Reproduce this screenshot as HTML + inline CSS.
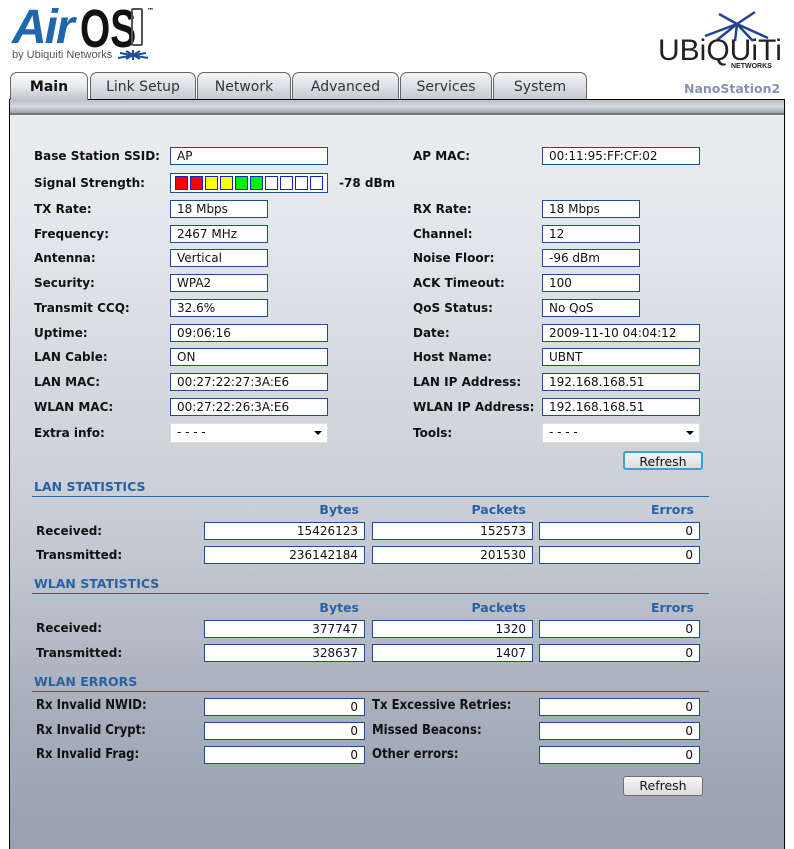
<!DOCTYPE html>
<html><head><meta charset="utf-8"><style>
*{margin:0;padding:0;box-sizing:border-box}
body{width:794px;height:842px;background:#fff;position:relative;overflow:hidden;font-family:"DejaVu Sans",Verdana,sans-serif;font-size:12px;color:#111}
.a{position:absolute}
.l{position:absolute;font-weight:bold;white-space:nowrap}
.b{position:absolute;background:#fff;border:1px solid #1e4f8c;height:18px;padding-left:6px;line-height:16px;font-size:12px;white-space:nowrap;font-weight:normal}
.r{text-align:right;padding-right:6px}
.h{position:absolute;font-weight:bold;color:#2a61a0;font-size:12.5px}
.line{position:absolute;height:1px;background:#2a61a0;left:32px;width:677px}
.tab{position:absolute;top:72px;height:28px;border:1px solid #666;border-bottom:none;border-radius:7px 7px 0 0;background:linear-gradient(#f3f4f6,#d7dbe0 60%,#c3c8cf);text-align:center;line-height:29px;font-size:14px;color:#333}
.btn{position:absolute;border:1px solid #707070;border-radius:3px;background:linear-gradient(#f6f6f6,#dcdcdc);font-size:12.5px;text-align:center;line-height:17px;color:#111}
.sel::after{content:"";position:absolute;right:5px;top:7px;border:4px solid transparent;border-top:4px solid #000;border-bottom:0}
.c{font-family:"DejaVu Sans Condensed","DejaVu Sans",sans-serif;font-size:13px}
</style></head><body>
<!-- logo -->
<div class="a" style="left:12px;top:0px;font:italic bold 48px 'Liberation Sans',sans-serif;color:#1f66ac;letter-spacing:-2px">Air</div>
<div class="a" style="left:80px;top:-2px;font:bold 54px 'Liberation Sans Narrow','Liberation Sans',sans-serif;color:#111;transform:scaleX(.72);transform-origin:left">OS</div>
<div class="a" style="left:131px;top:8px;width:12px;height:38px;border:2px solid #555;border-radius:2px"></div>
<div class="a" style="left:147px;top:7px;font-size:7px;font-weight:bold">™</div>
<div class="a" style="left:12px;top:49px;font:11px 'Liberation Sans Narrow','Liberation Sans',sans-serif;color:#555">by Ubiquiti Networks</div>
<svg class="a" style="left:116px;top:49px" width="34" height="12"><path d="M2 9 L30 4 M10 10 L24 2 M17 11 L17 1 M24 10 L10 2 M32 9 L4 4" stroke="#1f4f9a" stroke-width="2"/></svg>
<svg class="a" style="left:695px;top:10px" width="82" height="32"><g stroke="#22458f" stroke-width="2.5"><path d="M42 14 L10 26 M42 14 L22 30 M42 14 L40 31 M42 14 L58 31 M42 14 L73 28 M42 14 L60 2 M42 14 L24 4"/></g></svg>
<div class="a" style="left:658px;top:34px;font:30px 'Liberation Sans Narrow','Liberation Sans',sans-serif;color:#222">UBiQUiTi</div>
<div class="a" style="left:731px;top:63px;font:bold 7px 'Liberation Sans',sans-serif;color:#222">NETWORKS</div>
<div class="a" style="left:684px;top:81px;font-weight:bold;font-size:12.5px;color:#8494ad">NanoStation2</div>
<!-- tabs -->
<div class="tab" style="left:90px;width:106px">Link Setup</div>
<div class="tab" style="left:197px;width:94px">Network</div>
<div class="tab" style="left:292px;width:107px">Advanced</div>
<div class="tab" style="left:400px;width:92px">Services</div>
<div class="tab" style="left:493px;width:94px">System</div>
<!-- panel -->
<div class="a" style="left:9px;top:99px;width:776px;height:750px;border:1px solid #000;border-bottom:none;background:linear-gradient(#eceef1 0px,#e4e7eb 120px,#c8cdd5 420px,#a6adbb 620px,#8f98a8 842px)"></div>
<div class="a" style="left:10px;top:100px;width:774px;height:13px;background:linear-gradient(#b9bfc8,#d8dce2 50%,#9aa2ae)"></div>
<div class="a" style="left:10px;top:113px;width:774px;height:2px;background:#777"></div>
<div class="a" style="left:10px;top:72px;width:78px;height:28px;background:linear-gradient(#fff,#e6e9ed 50%,#bcc3cc);border-left:1px solid #666;border-right:1px solid #666;border-top:1px solid #666;border-radius:7px 7px 0 0;text-align:center;line-height:29px;font-weight:bold;font-size:14px">Main</div>

<!-- main info -->
<div class="l" style="left:34px;top:149px">Base Station SSID:</div><div class="b" style="left:170px;top:147px;width:158px">AP</div>
<div class="l" style="left:34px;top:176px">Signal Strength:</div>
<div class="b" style="left:170px;top:173px;width:158px;height:20px;padding:2px 0 0 4px">
<span style="display:flex;gap:2px"><i style="width:13px;height:14px;border:1px solid #12c;background:#f00"></i><i style="width:13px;height:14px;border:1px solid #12c;background:#f00"></i><i style="width:13px;height:14px;border:1px solid #12c;background:#ff0"></i><i style="width:13px;height:14px;border:1px solid #12c;background:#ff0"></i><i style="width:13px;height:14px;border:1px solid #12c;background:#0e0"></i><i style="width:13px;height:14px;border:1px solid #12c;background:#0e0"></i><i style="width:13px;height:14px;border:1px solid #12c"></i><i style="width:13px;height:14px;border:1px solid #12c"></i><i style="width:13px;height:14px;border:1px solid #12c"></i><i style="width:13px;height:14px;border:1px solid #12c"></i></span></div>
<div class="l" style="left:339px;top:176px">-78 dBm</div>
<div class="l" style="left:34px;top:202px">TX Rate:</div><div class="b" style="left:170px;top:200px;width:98px">18 Mbps</div>
<div class="l" style="left:34px;top:227px">Frequency:</div><div class="b" style="left:170px;top:225px;width:98px">2467 MHz</div>
<div class="l" style="left:34px;top:251px">Antenna:</div><div class="b" style="left:170px;top:249px;width:98px">Vertical</div>
<div class="l" style="left:34px;top:276px">Security:</div><div class="b" style="left:170px;top:274px;width:98px">WPA2</div>
<div class="l" style="left:34px;top:301px">Transmit CCQ:</div><div class="b" style="left:170px;top:299px;width:98px">32.6%</div>
<div class="l" style="left:34px;top:326px">Uptime:</div><div class="b" style="left:170px;top:324px;width:158px">09:06:16</div>
<div class="l" style="left:34px;top:350px">LAN Cable:</div><div class="b" style="left:170px;top:348px;width:158px">ON</div>
<div class="l" style="left:34px;top:375px">LAN MAC:</div><div class="b" style="left:170px;top:373px;width:158px">00:27:22:27:3A:E6</div>
<div class="l" style="left:34px;top:400px">WLAN MAC:</div><div class="b" style="left:170px;top:398px;width:158px">00:27:22:26:3A:E6</div>
<div class="l" style="left:34px;top:426px">Extra info:</div><div class="b sel" style="left:170px;top:423px;width:158px;height:20px;border-color:#ddd">- - - -</div>

<div class="l" style="left:413px;top:149px">AP MAC:</div><div class="b" style="left:542px;top:147px;width:158px">00:11:95:FF:CF:02</div>
<div class="l" style="left:413px;top:202px">RX Rate:</div><div class="b" style="left:542px;top:200px;width:98px">18 Mbps</div>
<div class="l" style="left:413px;top:227px">Channel:</div><div class="b" style="left:542px;top:225px;width:98px">12</div>
<div class="l" style="left:413px;top:251px">Noise Floor:</div><div class="b" style="left:542px;top:249px;width:98px">-96 dBm</div>
<div class="l" style="left:413px;top:276px">ACK Timeout:</div><div class="b" style="left:542px;top:274px;width:98px">100</div>
<div class="l" style="left:413px;top:301px">QoS Status:</div><div class="b" style="left:542px;top:299px;width:98px">No QoS</div>
<div class="l" style="left:413px;top:326px">Date:</div><div class="b" style="left:542px;top:324px;width:158px">2009-11-10 04:04:12</div>
<div class="l" style="left:413px;top:350px">Host Name:</div><div class="b" style="left:542px;top:348px;width:158px">UBNT</div>
<div class="l" style="left:413px;top:375px">LAN IP Address:</div><div class="b" style="left:542px;top:373px;width:158px">192.168.168.51</div>
<div class="l" style="left:413px;top:400px">WLAN IP Address:</div><div class="b" style="left:542px;top:398px;width:158px">192.168.168.51</div>
<div class="l" style="left:413px;top:426px">Tools:</div><div class="b sel" style="left:542px;top:423px;width:158px;height:20px;border-color:#ddd">- - - -</div>
<div class="btn" style="left:623px;top:451px;width:80px;height:19px;border:2px solid #3aa0d8">Refresh</div>

<!-- LAN stats -->
<div class="h" style="left:34px;top:479px">LAN STATISTICS</div><div class="line" style="top:496px"></div>
<div class="h" style="left:204px;top:502px;width:155px;text-align:right">Bytes</div>
<div class="h" style="left:372px;top:502px;width:154px;text-align:right">Packets</div>
<div class="h" style="left:539px;top:502px;width:155px;text-align:right">Errors</div>
<div class="l" style="left:36px;top:524px">Received:</div>
<div class="b r" style="left:204px;top:522px;width:161px">15426123</div><div class="b r" style="left:372px;top:522px;width:161px">152573</div><div class="b r" style="left:539px;top:522px;width:161px">0</div>
<div class="l" style="left:36px;top:548px">Transmitted:</div>
<div class="b r" style="left:204px;top:546px;width:161px">236142184</div><div class="b r" style="left:372px;top:546px;width:161px">201530</div><div class="b r" style="left:539px;top:546px;width:161px">0</div>

<!-- WLAN stats -->
<div class="h" style="left:34px;top:576px">WLAN STATISTICS</div><div class="line" style="top:593px"></div>
<div class="h" style="left:204px;top:600px;width:155px;text-align:right">Bytes</div>
<div class="h" style="left:372px;top:600px;width:154px;text-align:right">Packets</div>
<div class="h" style="left:539px;top:600px;width:155px;text-align:right">Errors</div>
<div class="l" style="left:36px;top:621px">Received:</div>
<div class="b r" style="left:204px;top:620px;width:161px">377747</div><div class="b r" style="left:372px;top:620px;width:161px">1320</div><div class="b r" style="left:539px;top:620px;width:161px">0</div>
<div class="l" style="left:36px;top:646px">Transmitted:</div>
<div class="b r" style="left:204px;top:644px;width:161px">328637</div><div class="b r" style="left:372px;top:644px;width:161px">1407</div><div class="b r" style="left:539px;top:644px;width:161px">0</div>

<!-- WLAN errors -->
<div class="h" style="left:34px;top:674px">WLAN ERRORS</div><div class="line" style="top:691px"></div>
<div class="l c" style="left:36px;top:698px">Rx Invalid NWID:</div><div class="b r" style="left:204px;top:698px;width:161px">0</div>
<div class="l c" style="left:372px;top:698px">Tx Excessive Retries:</div><div class="b r" style="left:539px;top:698px;width:161px">0</div>
<div class="l c" style="left:36px;top:723px">Rx Invalid Crypt:</div><div class="b r" style="left:204px;top:722px;width:161px">0</div>
<div class="l c" style="left:372px;top:723px">Missed Beacons:</div><div class="b r" style="left:539px;top:722px;width:161px">0</div>
<div class="l c" style="left:36px;top:747px">Rx Invalid Frag:</div><div class="b r" style="left:204px;top:746px;width:161px">0</div>
<div class="l c" style="left:372px;top:747px">Other errors:</div><div class="b r" style="left:539px;top:746px;width:161px">0</div>
<div class="btn" style="left:623px;top:776px;width:80px;height:20px">Refresh</div>
</body></html>
